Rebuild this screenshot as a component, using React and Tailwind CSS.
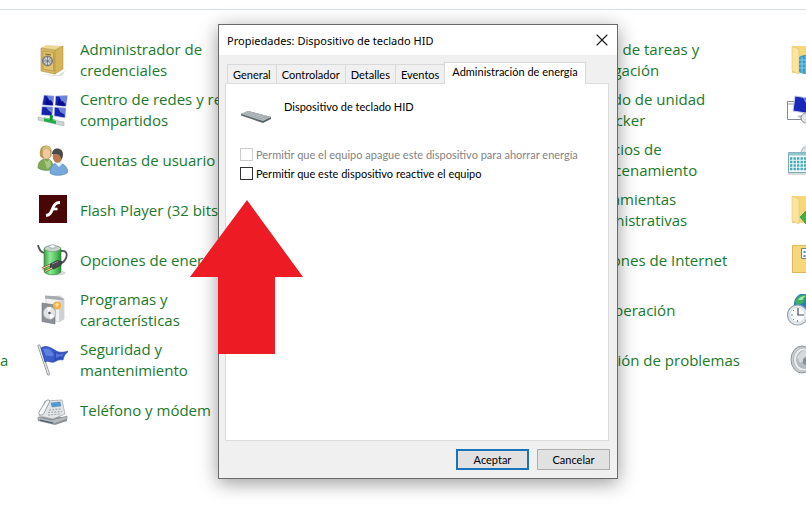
import { X } from "lucide-react";

function SafeIcon() {
  return (
    <svg viewBox="0 0 32 32" className="h-8 w-8 shrink-0" aria-hidden="true">
      <path d="M6 30l16 1 7-4-2 4-5 2z" fill="#e3e0d6" />
      <path d="M5 4l5-3 17 1-5 4z" fill="#ecd993" />
      <path d="M5 4l14 2v24L5 27z" fill="#d8b860" stroke="#a88a3c" strokeWidth=".6" />
      <path d="M19 6l8-4v23l-8 5z" fill="#d6b458" stroke="#a88a3c" strokeWidth=".5" />
      <path d="M7 7l10.500 1.500v18.500L7 25z" fill="#e0c470" stroke="#a88a3c" strokeWidth=".6" />
      <circle cx="11.500" cy="17" r="5" fill="#9aa1a2" stroke="#62696b" strokeWidth=".8" />
      <circle cx="11.500" cy="17" r="3.400" fill="#dde3e5" />
      <path d="M8.500 14.500l6 5M14.500 14l-6 6M11.500 12.500v9M7.500 17h8" stroke="#5d656a" strokeWidth=".7" />
      <path d="M9 10l6 .8" stroke="#8b6d26" strokeWidth="1.200" />
    </svg>
  );
}

function NetworkIcon() {
  return (
    <svg viewBox="0 0 32 32" className="h-8 w-8 shrink-0" aria-hidden="true">
      <g stroke="#d4dcf0" strokeWidth=".7">
        <path d="M8 1l10 1-1 10L6 11z" fill="#1524a8" />
        <path d="M19.500 2l12-.5-1.500 11-11-1z" fill="#1524a8" />
        <path d="M6 12.500l11 .5-1 9-11-1z" fill="#1524a8" />
        <path d="M18.500 13l11.500 1-1 10-11-2z" fill="#1524a8" />
      </g>
      <path d="M11 2l7 0-.7 7-4-3zM23 2l8-.3-1 8-4-2zM10 13l7 .3-.7 6-4-3zM22 13.500l8 .6-.8 7-5-3z" fill="#8aa0ea" opacity=".75" />
      <path d="M11 4l2 3 2-1 2 5-8-.5zM23 4l2 4 2-1 2 5-8-.8z" fill="#080c90" />
      <path d="M2 23l26 5v4L2 26z" fill="#cdd4d6" stroke="#9aa4a8" strokeWidth=".5" />
      <path d="M8 23.500l12 2.500v4L8 27.300z" fill="#20ad45" />
      <path d="M8 24l12 2.500" stroke="#72e18c" />
      <path d="M14 21l3 .5-.5 5-3-.6z" fill="#159337" />
    </svg>
  );
}

function UsersIcon() {
  return (
    <svg viewBox="0 0 32 32" className="h-8 w-8 shrink-0" aria-hidden="true">
      <path d="M2 24c0-6 3-9 8-9s7 3 7 9l-3 2c-5 1-9 0-12-2z" fill="#7fa953" stroke="#59833a" strokeWidth=".6" />
      <path d="M4 12c-1-6 1-10.500 6-10.500S16 5 15.500 12l-3 3-6-.5z" fill="#b49c55" />
      <ellipse cx="10.500" cy="9.500" rx="3.800" ry="5.300" fill="#f0c9a4" />
      <path d="M6 8c1-3 5-4 8.500-2l.5-2-3-2-5 1z" fill="#cfc078" />
      <path d="M8 15l3 3 3-3 1 7-4 3z" fill="#a9c982" />
      <path d="M14 29c0-7 3-10 8-10s9 3 10 9c-3 4-15 4.500-18 1z" fill="#76a8d9" stroke="#4d7cad" strokeWidth=".6" />
      <path d="M19 19l4 4 4-4-2-3h-4z" fill="#e6f1fa" />
      <ellipse cx="21.500" cy="12.500" rx="4.800" ry="6.300" fill="#b97a52" />
      <path d="M16 10c0-4 3-6 6-5.500 4 .5 6 4 4.500 9l-1.500 2c0-5-3-6-8-5.500z" fill="#4a4a4c" />
    </svg>
  );
}

function FlashIcon() {
  return (
    <svg viewBox="0 0 32 32" className="h-8 w-8 shrink-0" aria-hidden="true">
      <path d="M3 1h28v28H3z" fill="#480607" />
      <path d="M24 8.500c-5 0-6 3-7.500 6.500S14 21 10 21.500" fill="none" stroke="#fff" strokeWidth="3" />
      <path d="M16 15h5.500" stroke="#fff" strokeWidth="2.600" />
    </svg>
  );
}

function PowerIcon() {
  return (
    <svg viewBox="0 0 32 32" className="h-8 w-8 shrink-0" aria-hidden="true">
      <defs>
        <linearGradient id="battery">
          <stop offset="0" stopColor="#3a9f45" />
          <stop offset=".35" stopColor="#8fe896" />
          <stop offset=".65" stopColor="#5ccc66" />
          <stop offset="1" stopColor="#2b8f38" />
        </linearGradient>
      </defs>
      <ellipse cx="21" cy="29" rx="9" ry="2.500" fill="#d9dcda" />
      <path d="M8 5c0-4 17-4 17 0v22c0 5-17 5-17 0z" fill="url(#battery)" stroke="#367a3d" strokeWidth=".6" />
      <ellipse cx="16.500" cy="4.500" rx="8" ry="3" fill="#c8d7cd" stroke="#78897e" strokeWidth=".6" />
      <ellipse cx="16.500" cy="2.500" rx="3.400" ry="1.800" fill="#eef4f7" stroke="#7d8990" strokeWidth=".6" />
      <path d="M2 1c1 5 3 7 6 8M25 7c6-1 7 4 4 9-1 2-3 3-5 4" fill="none" stroke="#50545a" strokeWidth="1.800" />
      <path d="M14 20l7-3.500 5 1-1 3.500-7 4-4-1z" fill="#45484c" stroke="#222" strokeWidth=".5" />
      <path d="M14 21l-8 3.500M16 24l-7 3.500" stroke="#5f4e20" strokeWidth="2" />
      <path d="M14 21l-8 3.500M16 24l-7 3.500" stroke="#ead48c" strokeWidth="1.200" />
      <path d="M16 20l6-2.500" stroke="#8b9095" />
    </svg>
  );
}

function ProgramsIcon() {
  return (
    <svg viewBox="0 0 32 32" className="h-8 w-8 shrink-0" aria-hidden="true">
      <path d="M10 3l14-1 4 3v20l-5 3-13-3z" fill="#f1f2f3" stroke="#c0c4c7" strokeWidth=".6" />
      <path d="M9 1.500l14 1 5 2.500-1 1.500-18-2z" fill="#a6abaf" />
      <path d="M23 7l5-1v19l-5 3z" fill="#cfd2d5" />
      <path d="M6 9l13 2v19L6 27.500z" fill="#8c9195" stroke="#6f7478" strokeWidth=".6" />
      <circle cx="13.500" cy="19" r="6.200" fill="#dfe3e6" stroke="#9da3a8" strokeWidth=".6" />
      <path d="M13.500 19l-3-5.500 5-.3zM13.500 19l5 3.500-4 3z" fill="#fff" />
      <circle cx="13.500" cy="19" r="1.800" fill="#555" stroke="#f8f8f8" />
      <circle cx="21" cy="11.500" r="4" fill="#f1b04a" />
      <path d="M19 10.500l2-2 2 2-2 3z" fill="#ffe08a" />
    </svg>
  );
}

function FlagIcon() {
  return (
    <svg viewBox="0 0 32 32" className="h-8 w-8 shrink-0" aria-hidden="true">
      <path d="M3 2l9.500 28" stroke="#8f959b" strokeWidth="3" strokeLinecap="round" />
      <path d="M3 2l9.500 28" stroke="#e1e5e8" strokeWidth="1.400" strokeLinecap="round" />
      <path d="M5 4c5-3 8-1 12 1s5 5 16 2c-3 2-5 4-6 9-5-1-6 1-9 2-4 1-6-2-9 0z" fill="#3b5ccb" stroke="#2439a0" strokeWidth=".6" />
      <path d="M7 5c6-2 9 2 11 6-3 3-6-1-8 1z" fill="#6080e2" />
      <path d="M17 6c2 3 2 7 1 11 3-1 5-3 8-2 1-3 1-5 4-7-4 1-8 2-13-2z" fill="#2e4abb" />
      <path d="M20 9c3 2 5 1 8 0l-2 4c-2-1-4 0-6 1z" fill="#5573d8" />
    </svg>
  );
}

function PhoneIcon() {
  return (
    <svg viewBox="0 0 32 32" className="h-8 w-8 shrink-0" aria-hidden="true">
      <path d="M2 24l13-3 16 3v3l-12 4-17-4z" fill="#8f9498" />
      <path d="M2 23l14 3 15-4v3l-12 4.500L2 26z" fill="#b5babe" stroke="#7d8388" strokeWidth=".6" />
      <path d="M9 7l17-1 3 14-12 5L3 22z" fill="#e2e5e8" stroke="#9ba1a6" strokeWidth=".7" />
      <path d="M15 9l9-1 1 4-9 1z" fill="#4b9bdb" stroke="#5d7f98" strokeWidth=".5" />
      <path d="M3 18L10 7c2-2 5-1 3 2L8 19c-1 3-6 3-5-1z" fill="#f6f7f8" stroke="#888e93" strokeWidth=".8" />
      <path d="M13 16l12-1M12 18.500l14-1M12 21l13-1" stroke="#a3a9af" strokeWidth="1.200" strokeDasharray="2 1.200" />
      <path d="M4 26l13 3" stroke="#40576c" strokeWidth="1.200" />
    </svg>
  );
}

function FolderIcon({ kind }) {
  return (
    <svg viewBox="0 0 32 32" className="h-8 w-8 shrink-0" aria-hidden="true">
      <path d="M6 2h20v27H6z" fill="#f7d77c" />
      {kind !== "list" && <path d="M6 2l7 3v25l-7-3z" fill="#fae4a0" stroke="#e2ba5b" strokeWidth=".5" />}
      {kind === "globe" && (
        <>
          <path d="M13 14c0-4 14-4 14 0v13c0 4-14 4-14 0z" fill="#3b9ccc" />
          <path d="M13 16h14M13 20h14M13 24h14M16 13v17M20 12v18" stroke="#8ed8ee" strokeWidth=".8" />
        </>
      )}
      {kind === "arrow" && (
        <path d="M14 23l6-6v4h7v6h-7v3z" fill="#35b547" stroke="#23843a" strokeWidth=".6" />
      )}
      {kind === "list" && (
        <>
          <path d="M6.500 1.500h20v27h-20z" fill="none" stroke="#dfb75a" />
          <path d="M15.500 4.500h11v10h-11z" fill="#fff" stroke="#77828b" />
          <path d="M17.500 7h2v2h-2zM17.500 11h2v2h-2z" fill="#4d8dc3" />
        </>
      )}
    </svg>
  );
}

function RemoteIcon() {
  return (
    <svg viewBox="0 0 32 32" className="h-8 w-8 shrink-0" aria-hidden="true">
      <path d="M1.500 7.500h17v18h-17z" fill="#fff" stroke="#858c92" />
      <path d="M2 10h16" stroke="#a1a7ac" />
      <path d="M9 2l19 3-2 15-19-3z" fill="#1a28b7" stroke="#c4cbe4" />
      <path d="M17 4l8 1-2 10z" fill="#6d85e2" />
      <path d="M11 22l9-2v8z" fill="#b9bfc4" />
      <circle cx="20" cy="24" r="5" fill="#e1e5e8" stroke="#8c9499" />
    </svg>
  );
}

function CalendarIcon() {
  return (
    <svg viewBox="0 0 32 32" className="h-8 w-8 shrink-0" aria-hidden="true">
      <circle cx="22" cy="9" r="7" fill="#dce2e4" stroke="#a7b0b4" />
      <path d="M2.500 8.500h26v20h-26z" fill="#f2fafb" stroke="#80a5ae" />
      <path d="M2.500 8.500h26v3h-26z" fill="#8fc5d0" />
      <path d="M4 14.500h24M4 18h24M4 21.500h24M4 25h24" stroke="#43a9ba" strokeWidth="2.400" strokeDasharray="2.400 1.100" />
      <path d="M2 30h28" stroke="#c9cfd1" strokeWidth="1.500" />
    </svg>
  );
}

function ClockIcon() {
  return (
    <svg viewBox="0 0 32 32" className="h-8 w-8 shrink-0" aria-hidden="true">
      <circle cx="19" cy="10" r="11" fill="#2680c0" />
      <path d="M9 8c2-6 7-8 12-7l-4 8-5 2z" fill="#41b05b" />
      <path d="M12 6c2-3 4-4 7-4l-3 4z" fill="#a9e6af" />
      <circle cx="11.500" cy="21" r="10" fill="#e6ebef" stroke="#9aa3aa" strokeWidth="1.200" />
      <circle cx="11.500" cy="21" r="7.500" fill="#f9fbfc" stroke="#c4cbd0" strokeWidth=".6" />
      <path d="M12 14v7h6" fill="none" stroke="#414c56" strokeWidth="1.200" />
      <path d="M5 21h2M11.500 26v2M7 16l1 1M7 26l1-1" stroke="#838c93" />
    </svg>
  );
}

function SpeakerIcon() {
  return (
    <svg viewBox="0 0 32 32" className="h-8 w-8 shrink-0" aria-hidden="true">
      <ellipse cx="16" cy="15.500" rx="11" ry="13.500" fill="#c9cdd0" stroke="#8d9397" />
      <ellipse cx="17.500" cy="15.500" rx="10" ry="11.500" fill="#eceef0" stroke="#a4aaae" strokeWidth=".7" />
      <ellipse cx="18.500" cy="15.500" rx="8.500" ry="9.500" fill="#b4babf" />
      <path d="M11 13c3-5 6-6 9-7v9l-6 4z" fill="#d5d9dc" />
      <circle cx="21" cy="17" r="4" fill="#868e94" />
    </svg>
  );
}

const mainItems = [
  { icon: <SafeIcon />, lines: ["Administrador de", "credenciales"] },
  { icon: <NetworkIcon />, lines: ["Centro de redes y recursos", "compartidos"] },
  { icon: <UsersIcon />, lines: ["Cuentas de usuario"] },
  { icon: <FlashIcon />, lines: ["Flash Player (32 bits)"] },
  { icon: <PowerIcon />, lines: ["Opciones de energía"] },
  { icon: <ProgramsIcon />, lines: ["Programas y", "características"] },
  { icon: <FlagIcon />, lines: ["Seguridad y", "mantenimiento"] },
  { icon: <PhoneIcon />, lines: ["Teléfono y módem"] },
];

const systemItems = [
  { lines: ["Barra de tareas y", "navegación"] },
  { lines: ["Cifrado de unidad", "BitLocker"] },
  { lines: ["Espacios de", "almacenamiento"] },
  { lines: ["Herramientas", "administrativas"] },
  { lines: ["Opciones de Internet"] },
  { lines: ["Recuperación"] },
  { lines: ["Solución de problemas"] },
];

const edgeIcons = [
  <FolderIcon key="globe" kind="globe" />,
  <RemoteIcon key="remote" />,
  <CalendarIcon key="calendar" />,
  <FolderIcon key="arrow" kind="arrow" />,
  <FolderIcon key="list" kind="list" />,
  <ClockIcon key="clock" />,
  <SpeakerIcon key="speaker" />,
];

const tabs = ["General", "Controlador", "Detalles", "Eventos"];

function PanelItem({ item }) {
  return (
    <li className="flex h-[50px] items-center gap-3">
      {item.icon || <span className="h-8 w-8 shrink-0" />}
      <a href="#item" className="whitespace-nowrap text-[15px] leading-[21px] text-[#1b7a2b]">
        {item.lines.map((line) => (
          <span key={line} className="block">{line}</span>
        ))}
      </a>
    </li>
  );
}

function PropertiesDialog() {
  return (
    <section
      role="dialog"
      aria-labelledby="dialog-title"
      className="absolute left-[218px] top-6 w-[400px] border border-[#6b6b6b] bg-[#f0f0f0] pb-2 font-['Liberation_Sans_Narrow',Lato,sans-serif] text-[11px] leading-[13px] text-black shadow-[0_4px_18px_rgba(0,0,0,0.4)]"
    >
      <header className="flex h-[30px] items-center justify-between bg-white pl-2 pr-[5px]">
        <h1 id="dialog-title" className="font-['Noto_Sans',sans-serif] text-[11px]">
          Propiedades: Dispositivo de teclado HID
        </h1>
        <button type="button" aria-label="Cerrar" className="text-[#222]">
          <X className="h-5 w-5" strokeWidth={1.4} />
        </button>
      </header>

      <div className="px-2 pt-[7px]">
        <div role="tablist" className="flex items-end">
          {tabs.map((tab) => (
            <button
              key={tab}
              type="button"
              role="tab"
              aria-selected="false"
              className="h-[19px] border border-b-0 border-r-0 border-[#d9d9d9] bg-[#f0f0f0] px-[5px]"
            >
              {tab}
            </button>
          ))}
          <button
            type="button"
            role="tab"
            aria-selected="true"
            className="relative -mb-px h-[22px] border border-b-0 border-[#d9d9d9] bg-white px-[7px] pb-1"
          >
            Administración de energía
          </button>
        </div>

        <div role="tabpanel" className="-ml-0.5 h-[358px] border border-[#dcdcdc] bg-white px-[14px] pt-4">
          <div className="flex h-[45px] gap-3">
            <svg viewBox="0 0 32 14" className="mt-[11px] h-[14px] w-8" aria-hidden="true">
              <path d="M1 3l7-3 23 6v2l-8 4L1 4.500z" fill="#59646a" />
              <path d="M1 3l7-3 23 6-8 4z" fill="#b3bbc0" />
              <path d="M4 3l5-2 19 5-5 2.500z" fill="#9ba4a9" />
              <path d="M6 2.500l18 5M8 1.500l18 5" stroke="#c9d0d4" strokeWidth=".6" />
            </svg>
            <p>Dispositivo de teclado HID</p>
          </div>
          <label className="flex h-[19px] items-center gap-[3px] text-[#838383]">
            <input type="checkbox" disabled className="h-[13px] w-[13px] appearance-none border border-[#cccccc] bg-white" />
            Permitir que el equipo apague este dispositivo para ahorrar energía
          </label>
          <label className="flex h-[19px] items-center gap-[3px]">
            <input type="checkbox" className="h-[13px] w-[13px] appearance-none border border-[#333] bg-white" />
            Permitir que este dispositivo reactive el equipo
          </label>
        </div>
      </div>

      <footer className="flex justify-end gap-2 pr-[7px] pt-2">
        <button type="button" className="h-[21px] w-[73px] border-2 border-[#1874b8] bg-[#e1e1e1]">Aceptar</button>
        <button type="button" className="h-[21px] w-[73px] border border-[#adadad] bg-[#e1e1e1]">Cancelar</button>
      </footer>
    </section>
  );
}

export default function App() {
  return (
    <main className="relative min-h-screen overflow-hidden bg-white font-['Open_Sans',sans-serif]">
      <div className="h-[10px] border-b border-[#d3e0ea]" />
      <div className="grid grid-cols-[36px_500px_250px_32px] pt-[25px]">
        <div className="flex h-[350px] items-end">
          <span className="flex h-[50px] items-center text-[15px] text-[#1b7a2b]">a</span>
        </div>
        <ul>
          {mainItems.map((item) => (
            <PanelItem key={item.lines[0]} item={item} />
          ))}
        </ul>
        <ul>
          {systemItems.map((item) => (
            <PanelItem key={item.lines[0]} item={item} />
          ))}
        </ul>
        <ul>
          {edgeIcons.map((icon) => (
            <li key={icon.key} className="flex h-[50px] items-center">{icon}</li>
          ))}
        </ul>
      </div>

      <PropertiesDialog />

      <svg viewBox="0 0 113 154" className="absolute left-[190px] top-[200px] w-[113px]" aria-hidden="true">
        <path d="M57 0l56 77H85v77H28V77H0z" fill="#ed1c24" />
      </svg>
    </main>
  );
}
